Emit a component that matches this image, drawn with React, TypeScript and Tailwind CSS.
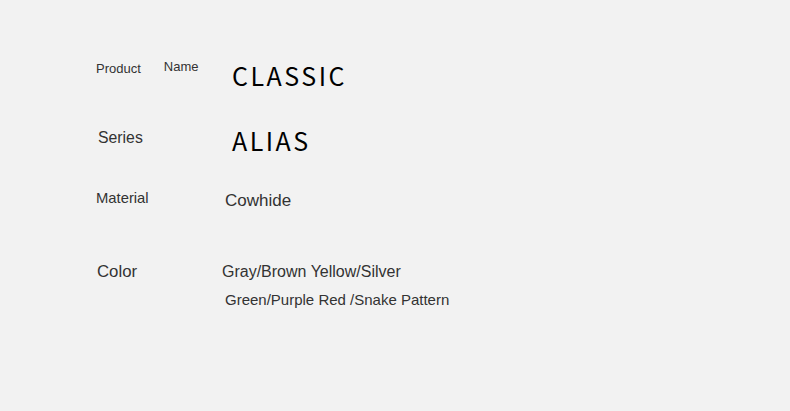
export default function App() {
  const sans = { fontFamily: '"Liberation Sans", Arial, sans-serif' };
  const big = { fontFamily: '"Noto Sans CJK SC", "Noto Sans", sans-serif' };
  return (
    <div className="w-[790px] h-[411px] bg-[#f2f2f2] overflow-hidden relative text-[#333]" style={sans}>
      <div className="flex flex-col pl-[96px] pt-[59px]">
        <div className="flex items-start h-[66px]">
          <div className="flex w-[136px] text-[13px] leading-[16px]">
            <span className="pt-[2px]">Product</span>
            <span className="ml-[23px]">Name</span>
          </div>
          <span className="text-[25px] leading-[32px] tracking-[2.5px] text-black" style={big}>CLASSIC</span>
        </div>
        <div className="flex items-start h-[62px]">
          <span className="w-[136px] pl-[2px] text-[15.8px] leading-[20px] pt-[3px]">Series</span>
          <span className="text-[25px] leading-[32px] tracking-[2.5px] text-black -mt-[1px]" style={big}>ALIAS</span>
        </div>
        <div className="flex items-start h-[72px]">
          <span className="w-[129px] text-[14.8px] leading-[18px] pt-[2px]">Material</span>
          <span className="text-[17px] leading-[20px] pt-[4px]">Cowhide</span>
        </div>
        <div className="flex items-start">
          <span className="w-[126px] pl-[1px] text-[16.8px] leading-[20px] pt-[3px]">Color</span>
          <div className="flex flex-col">
            <span className="text-[16px] leading-[20px] pt-[3px]">Gray/Brown Yellow/Silver</span>
            <span className="ml-[3px] mt-[9px] text-[15px] leading-[18px]">Green/Purple Red /Snake Pattern</span>
          </div>
        </div>
      </div>
    </div>
  );
}
